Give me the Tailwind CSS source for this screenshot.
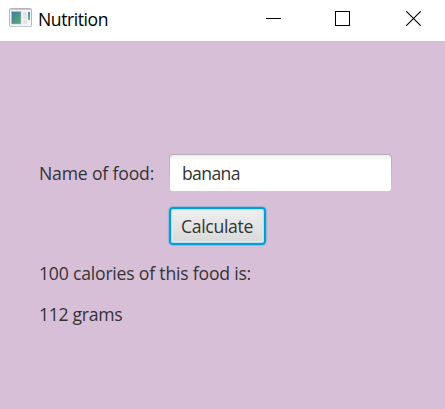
<!DOCTYPE html>
<html lang="en">
<head>
<meta charset="utf-8">
<title>Nutrition</title>
<script src="https://cdn.jsdelivr.net/npm/@tailwindcss/browser@4"></script>
</head>
<body class="w-[445px] h-[409px] overflow-hidden flex flex-col bg-[#d8bfd8] font-['Open_Sans','Noto_Sans',sans-serif] text-[17.6px] leading-6 text-[#333]">
  <header class="h-[41px] shrink-0 bg-white flex items-start text-black">
    <svg class="ml-[9px] mt-2 shrink-0" width="24" height="20" viewBox="0 0 24 20">
      <defs>
        <linearGradient id="pane" x1="0" y1="0" x2="1" y2="1"><stop offset="0" stop-color="#4178a8"/><stop offset="1" stop-color="#55b070"/></linearGradient>
        <linearGradient id="side" x1="0" y1="0" x2="0" y2="1"><stop offset="0" stop-color="#4b86bd"/><stop offset="1" stop-color="#6cba80"/></linearGradient>
      </defs>
      <rect x=".5" y=".5" width="22" height="18" rx="1" fill="#f5f5f5" stroke="#b5b6ba"/>
      <path d="M1 1.5h21M1 18.5h21" stroke="#c3c7cf"/>
      <rect x="2.5" y="3.5" width="9.5" height="12.5" fill="url(#pane)" stroke="#a9c3c8" stroke-width=".6"/>
      <path d="M14 4h4v7h-4zM14 12h4v4h-4z" fill="#e4e4e6"/>
      <rect x="19" y="4" width="2" height="8" fill="url(#side)"/>
    </svg>
    <h1 class="ml-[5px] mt-[7px] w-[71px] whitespace-nowrap tracking-[-0.45px]">Nutrition</h1>
    <div class="ml-auto mr-6 mt-[11px] flex gap-[54px]">
      <svg width="15" height="15" viewBox="0 0 15 15"><path d="M0 7.5h15" stroke="#000"/></svg>
      <svg width="15" height="15" viewBox="0 0 15 15"><rect x=".5" y=".5" width="14" height="14" fill="none" stroke="#000"/></svg>
      <svg class="ml-[2px]" width="15" height="15" viewBox="0 0 15 15"><path d="M.3.3l14.4 14.4M14.7.3L.3 14.7" stroke="#000" stroke-width="1.1"/></svg>
    </div>
  </header>
  <main class="pt-[113px] pl-[39px]">
    <div class="grid grid-cols-[115px_223px] gap-x-[15px] gap-y-[15px]">
      <label for="food" class="h-[38px] pt-[7px] whitespace-nowrap tracking-[-0.17px]">Name of food:</label>
      <div class="h-[38px] rounded-[4px] p-px bg-linear-to-b from-[#b0b0b0] to-[#cbcbcb]">
        <input id="food" value="banana" class="block w-full h-full rounded-[3px] pl-[12px] pb-0 outline-none bg-[linear-gradient(to_bottom,#eeeeee,#ffffff_6px)] tracking-[-0.65px]">
      </div>
      <button class="col-start-2 w-[97px] h-[38px] rounded-[4px] border-2 border-[#039ed3] bg-linear-to-b from-[#efefef] to-[#d9d9d9] shadow-[inset_0_0_0_1px_#b9dfec,inset_0_0_0_2px_#dcebef,0_0_1px_1px_#039ed344] whitespace-nowrap tracking-[-0.3px] pr-[1px]">Calculate</button>
    </div>
    <p class="mt-[16px] whitespace-nowrap tracking-[-0.2px]">100 calories of this food is:</p>
    <p class="mt-[17px] whitespace-nowrap tracking-[-0.3px]">112 grams</p>
  </main>
</body>
</html>
